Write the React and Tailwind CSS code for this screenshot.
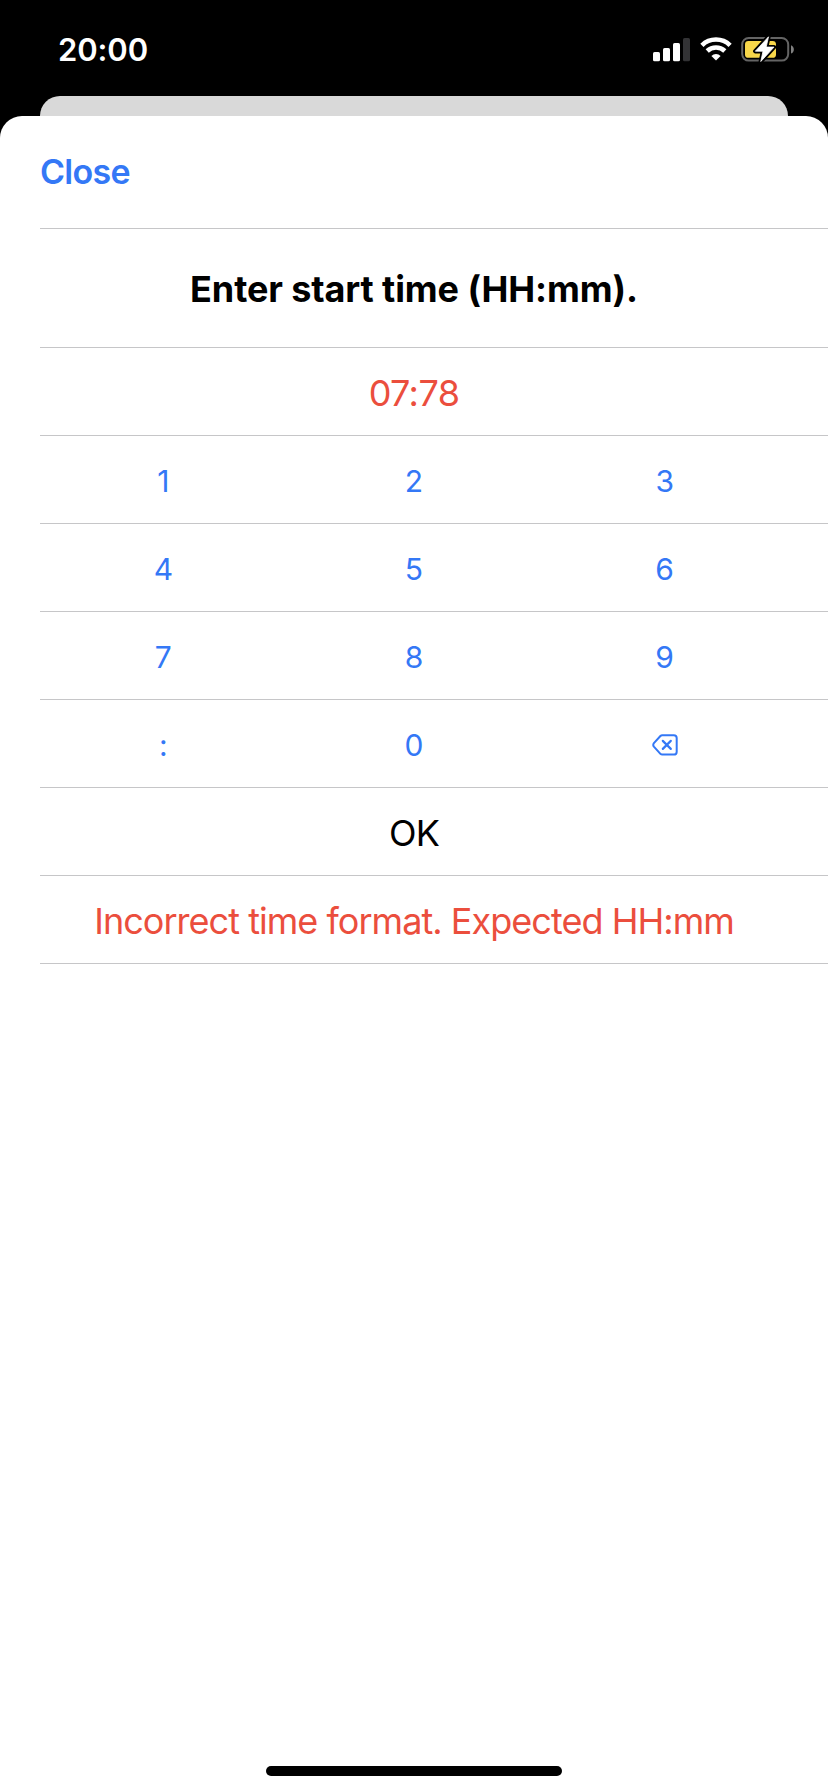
import React from "react";

const keypad = [
  ["1", "2", "3"],
  ["4", "5", "6"],
  ["7", "8", "9"],
  [":", "0", "back"],
];

function SignalIcon() {
  return (
    <svg className="block" width="38" height="24" viewBox="0 0 38 24">
      <rect x="0" y="14" width="7" height="9.3" rx="1.6" fill="#fff" />
      <rect x="10" y="10" width="7" height="13.3" rx="1.6" fill="#fff" />
      <rect x="20" y="5" width="7" height="18.3" rx="1.6" fill="#fff" />
      <rect x="30" y="0" width="7" height="23.3" rx="1.6" fill="#333335" />
    </svg>
  );
}

function WifiIcon() {
  return (
    <svg className="block" width="32" height="24" viewBox="0 0 32 24">
      <g fill="none" stroke="#fff" strokeWidth="4.6">
        <path d="M1.9 8.3 A20.2 20.2 0 0 1 30.1 8.3" />
        <path d="M7.2 14 A12.8 12.8 0 0 1 24.8 14" />
      </g>
      <path d="M16 23.6 L11.4 18.9 A6.8 6.8 0 0 1 20.6 18.9 Z" fill="#fff" />
    </svg>
  );
}

function BatteryIcon() {
  return (
    <svg className="block" width="54" height="28" viewBox="0 0 54 28">
      <rect x="1.2" y="3" width="46" height="22.6" rx="6.5" fill="none" stroke="#646464" strokeWidth="2" />
      <path d="M50 10.2 C53.8 11.5 53.8 17.3 50 18.6 Z" fill="#808080" />
      <rect x="4" y="6" width="31" height="16.8" rx="3.4" fill="#f8d74a" />
      <path d="M27.5 1.8 L14.3 16.2 H22 L19.8 26.5 L33 12.1 H25.2 Z" fill="#fff" stroke="#000" strokeWidth="4.4" strokeLinejoin="round" />
      <path d="M27.5 1.8 L14.3 16.2 H22 L19.8 26.5 L33 12.1 H25.2 Z" fill="#fff" stroke="#fff" strokeWidth="0.8" strokeLinejoin="round" />
    </svg>
  );
}

function DeleteLeftIcon() {
  return (
    <svg className="block" width="26" height="22" viewBox="0 0 26 22" fill="none" stroke="#3478f6" strokeWidth="2" strokeLinecap="round" strokeLinejoin="round">
      <path d="M10.2 1.2 H21.8 Q24.7 1.2 24.7 4.1 V17.7 Q24.7 20.6 21.8 20.6 H10.2 Q9.2 20.6 8.4 19.8 L1.9 12.6 Q0.6 10.9 1.9 9.2 L8.4 2 Q9.2 1.2 10.2 1.2 Z" />
      <path d="M10.8 6.9 L18.8 14.9 M18.8 6.9 L10.8 14.9" strokeWidth="2.2" />
    </svg>
  );
}

function StatusBar() {
  return (
    <header className="flex h-24 shrink-0 items-start justify-between pl-[58px] pr-[33px] text-white">
      <span className="mt-[30px] text-[31px] leading-[40px] font-[560] tracking-[-0.1px]">20:00</span>
      <div className="mt-[36px] flex h-7 items-start">
        <div className="mt-[2px]"><SignalIcon /></div>
        <div className="mt-[1px] ml-[9px]"><WifiIcon /></div>
        <div className="-mt-[1px] ml-[9px]"><BatteryIcon /></div>
      </div>
    </header>
  );
}

export default function App() {
  return (
    <div className="flex h-[1792px] w-[828px] flex-col overflow-hidden bg-black font-['Inter','Liberation_Sans',sans-serif]">
      <StatusBar />
      <div className="mx-10 h-5 shrink-0 rounded-t-[20px] bg-[#d9d9d9]" />
      <main className="flex flex-1 flex-col rounded-t-[22px] bg-white">
        <div className="ml-10 flex h-[113px] items-start border-b border-[#c6c6c8]">
          <button className="mt-[34px] text-[34px] leading-[44px] font-[560] tracking-[-0.7px] text-[#3478f6]">Close</button>
        </div>
        <div className="ml-10 flex h-[119px] items-center justify-center border-b border-[#c6c6c8] pt-px pr-10">
          <h1 className="text-[36px] leading-[44px] font-bold tracking-[-0.1px] whitespace-nowrap text-black">Enter start time (HH:mm).</h1>
        </div>
        <div className="ml-10 flex h-[88px] items-center justify-center border-b border-[#c6c6c8] pt-[2px] pr-10 text-[36px] leading-[44px] tracking-[-0.6px] text-[#eb4e3d]">
          <span>07:78</span>
        </div>
        {keypad.map((row) => (
          <div key={row[0]} className="ml-10 grid h-[88px] grid-cols-3 items-center gap-x-1 border-b border-[#c6c6c8] pt-[2px] pr-10 text-[30px] leading-[40px] text-[#3478f6]">
            {row.map((key) => (
              <button key={key} className="flex items-center justify-center">
                {key === "back" ? <DeleteLeftIcon /> : key}
              </button>
            ))}
          </div>
        ))}
        <button className="ml-10 flex h-[88px] items-center justify-center border-b border-[#c6c6c8] pt-[2px] pr-10 text-[36px] leading-[44px] tracking-[-0.8px] text-black">
          <span>OK</span>
        </button>
        <div className="ml-10 flex h-[88px] items-center justify-center border-b border-[#c6c6c8] pt-[2px] pr-10 text-[36px] leading-[44px] tracking-[-0.96px] text-[#eb4e3d]">
          <span className="whitespace-nowrap">Incorrect time format. Expected HH:mm</span>
        </div>
        <div className="mt-auto mb-4 flex justify-center">
          <div className="h-[10px] w-[296px] rounded-full bg-black" />
        </div>
      </main>
    </div>
  );
}
